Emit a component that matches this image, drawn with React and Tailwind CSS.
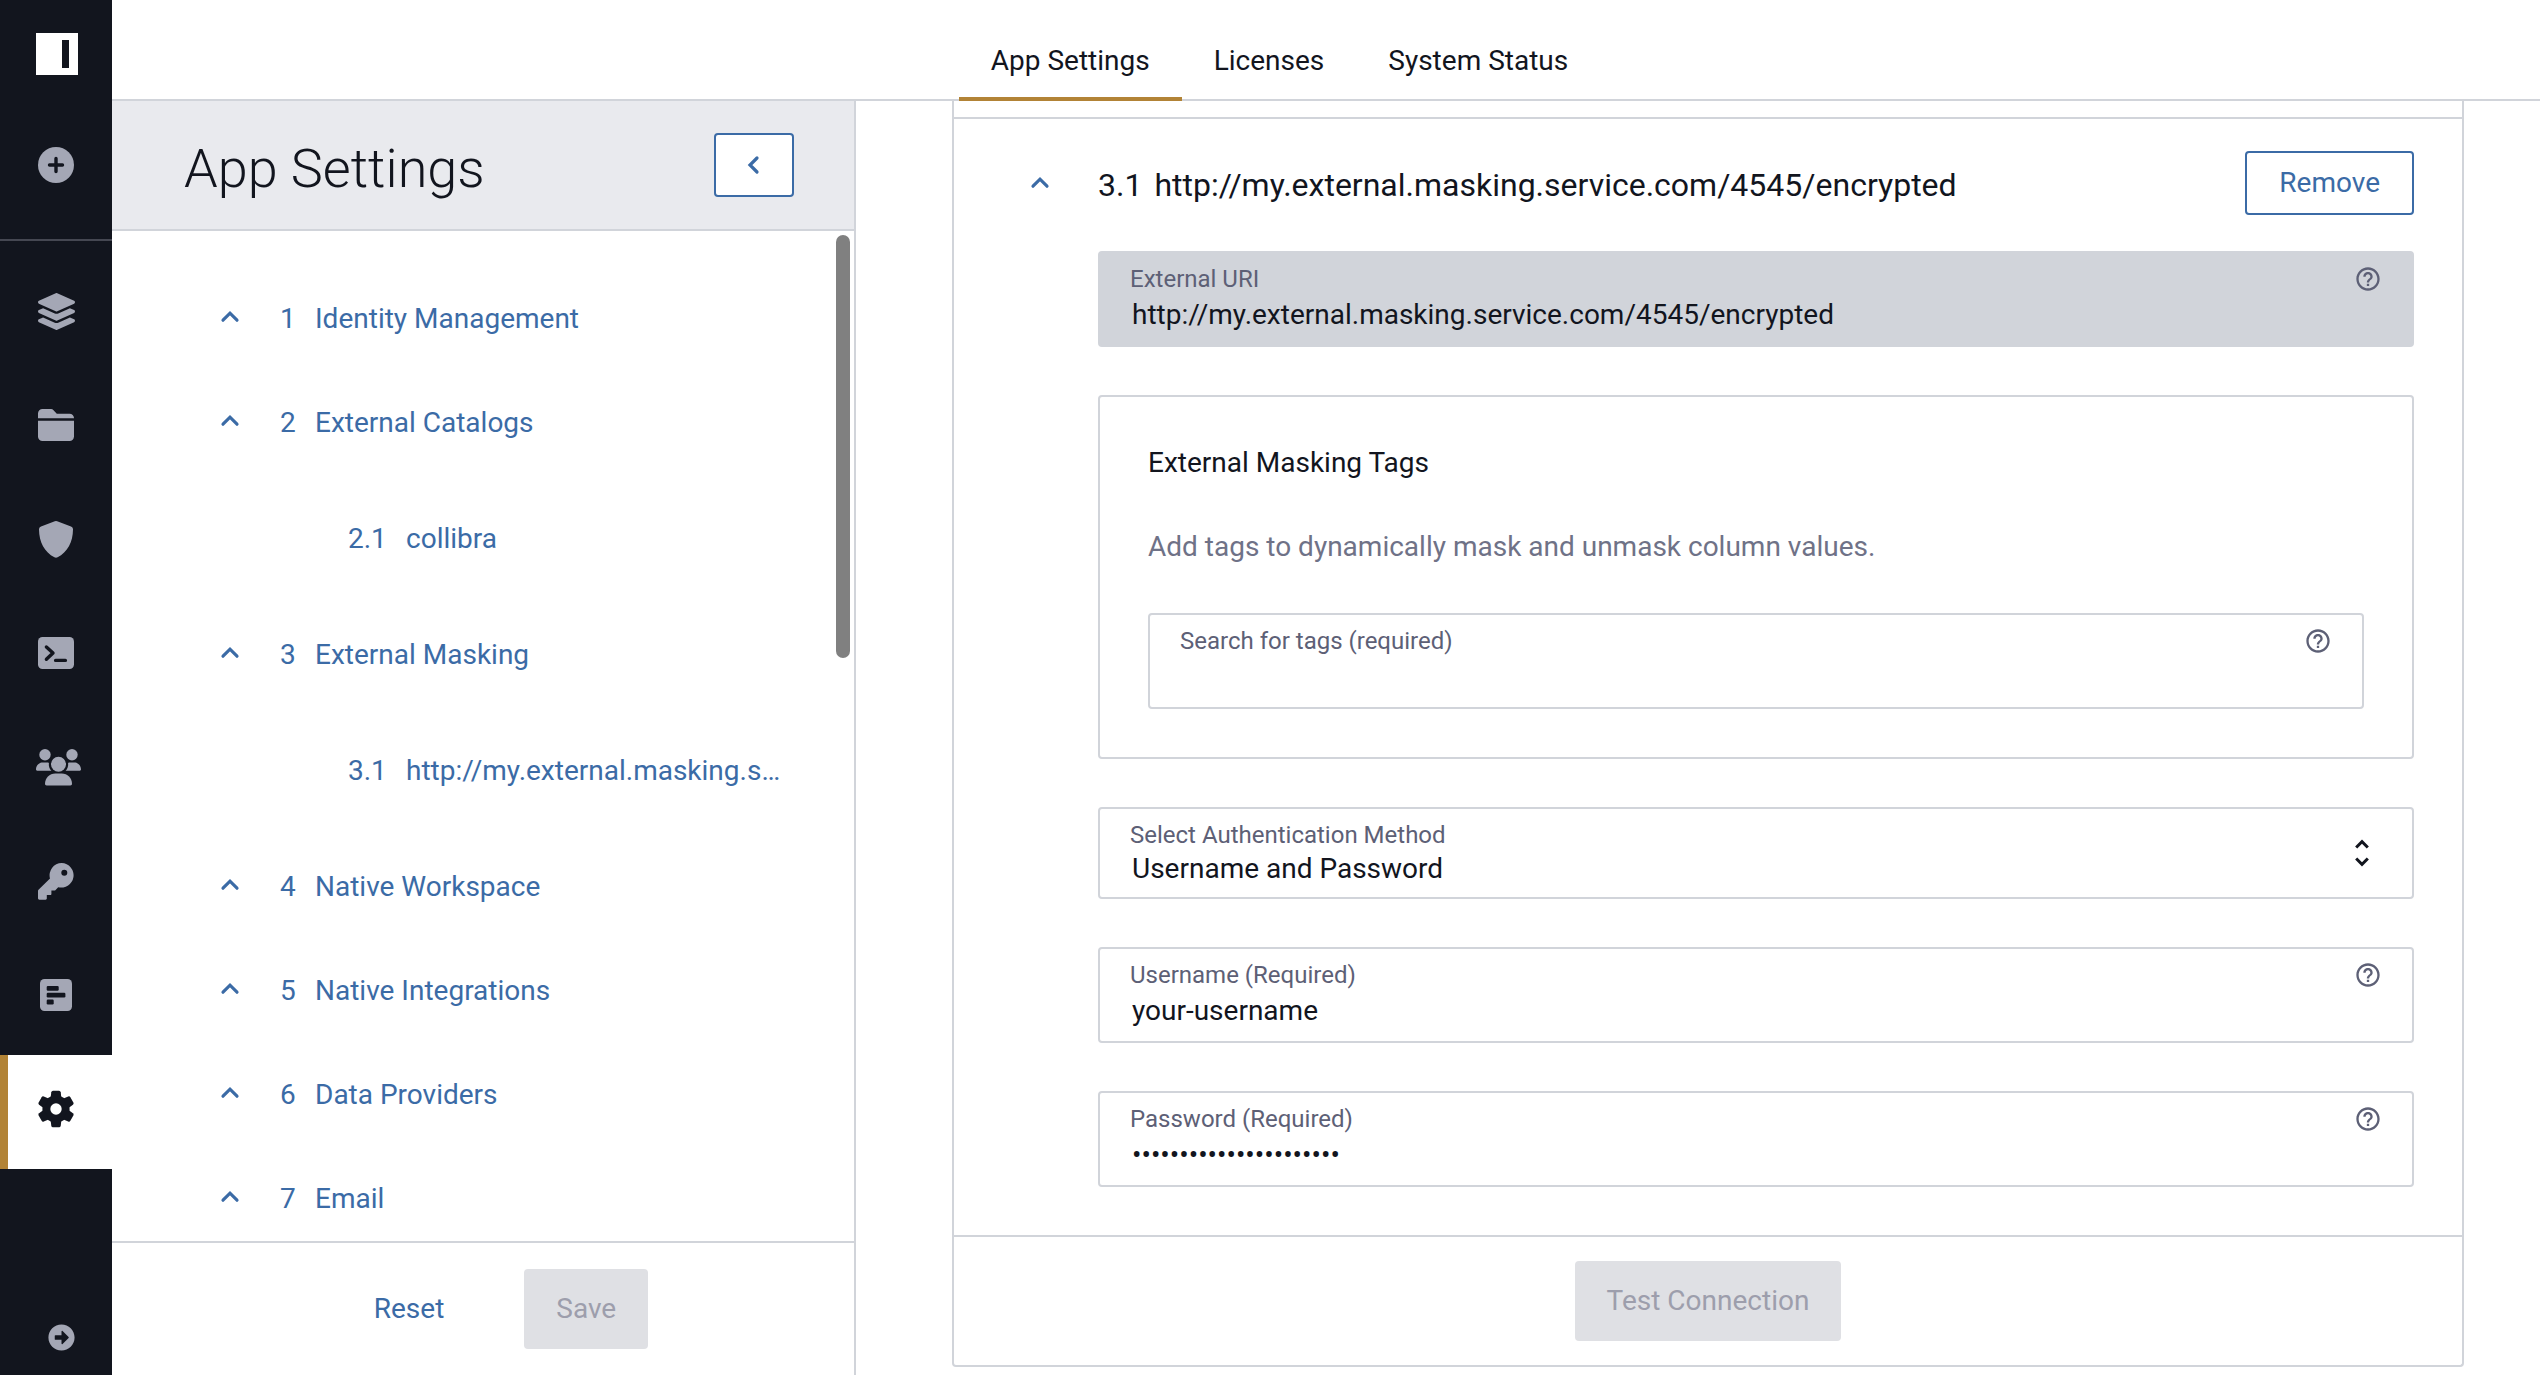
import { useState } from 'react';
import { FaLayerGroup, FaArrowAltCircleRight } from 'react-icons/fa';
import { MdHelpOutline, MdUnfoldMore } from 'react-icons/md';

const Logo = () => (
  <svg width="44" height="42" viewBox="-2 0 44 42">
    <rect width="42" height="42" fill="#fff" />
    <rect x="26" y="7" width="7" height="28" fill="#12151e" />
  </svg>
);

const PlusIcon = () => (
  <svg width="36" height="36" viewBox="0 0 36 36">
    <circle cx="18" cy="18" r="18" fill="currentColor" />
    <path d="M18 11.500v13M11.500 18h13" stroke="#12151e" strokeWidth="3.400" strokeLinecap="round" />
  </svg>
);

const FolderIcon = () => (
  <svg width="36" height="32" viewBox="0 0 36 32" fill="currentColor">
    <path d="M0 9.300V4.500A4.500 4.500 0 0 1 4.500 0h8.700a3 3 0 0 1 2.100 .9l3.500 3.800h12.700A4.500 4.500 0 0 1 36 9.300z" />
    <path d="M0 11.700h36v15.800a4.500 4.500 0 0 1-4.500 4.500h-27A4.500 4.500 0 0 1 0 27.500z" />
  </svg>
);

const ShieldIcon = () => (
  <svg width="34" height="37" viewBox="0 0 34 37" fill="currentColor">
    <path d="M15.800 .3a3 3 0 0 1 2.400 0L32 5.600A3 3 0 0 1 34 8.600C33.900 21 28.500 31.500 18.600 36.300a3.500 3.500 0 0 1-3.200 0C5.500 31.500 .1 21 0 8.600A3 3 0 0 1 2 5.600z" />
  </svg>
);

const TerminalIcon = () => (
  <svg width="36" height="32" viewBox="0 0 36 32" fill="none">
    <rect width="36" height="32" rx="4.500" fill="currentColor" />
    <path d="M8.400 10l6.600 6-6.600 6.300M17.600 23.400h9.800" stroke="#12151e" strokeWidth="3.400" strokeLinecap="round" strokeLinejoin="round" />
  </svg>
);

const UsersIcon = () => (
  <svg width="50" height="37" viewBox="-5 0 50 37" fill="currentColor">
    <circle cx="9" cy="5.700" r="5.700" />
    <circle cx="36" cy="5.700" r="5.700" />
    <circle cx="22.500" cy="15.300" r="7.500" />
    <path d="M9 34.800c0-6 4.500-10.400 10.300-10.400h6.400c5.800 0 10.300 4.400 10.300 10.400 0 .9-.7 1.600-1.600 1.600H10.600c-.9 0-1.600-.7-1.600-1.600z" />
    <path d="M0 20.600c0-4 3-7 6.800-7h4.400c.6 0 1.200.1 1.700.3-.4 3 .5 5.800 2.500 7.900H1.200c-.7 0-1.200-.5-1.200-1.200z" />
    <path d="M45 20.600c0-4-3-7-6.800-7h-4.400c-.6 0-1.200.1-1.700.3.400 3-.5 5.800-2.500 7.900h14.200c.7 0 1.200-.5 1.200-1.200z" />
  </svg>
);

const KeyIcon = () => (
  <svg width="36" height="37" viewBox="0 0 36 37" fill="currentColor" fillRule="evenodd">
    <path d="M23.700 0a12.300 12.300 0 1 1-3.500 24.200L17.600 26.900c-.3.400-.8.600-1.200.6h-3v3.400c0 .7-.5 1.200-1.200 1.200H8.800v3.400c0 .7-.5 1.200-1.200 1.200H1.400C.6 36.700 0 36.100 0 35.300v-7.400c0-.4.200-.9.500-1.200L12 15.600A12.300 12.300 0 0 1 23.700 0zM26.300 6.700a3 3 0 1 0 0 6 3 3 0 0 0 0-6z" />
  </svg>
);

const ReportIcon = () => (
  <svg width="32" height="32" viewBox="0 0 32 32">
    <rect width="32" height="32" rx="4.500" fill="currentColor" />
    <g fill="#12151e">
      <rect x="6.700" y="6.900" width="12" height="4.800" rx="1.200" />
      <rect x="6.700" y="13.700" width="18.700" height="4.800" rx="1.200" />
      <rect x="6.700" y="20.600" width="7" height="4.800" rx="1.200" />
    </g>
  </svg>
);

const GearIcon = () => (
  <svg width="38" height="38" viewBox="-19 -19 38 38">
    <g fill="#12151e">
      <circle r="13.600" />
      {[0, 60, 120, 180, 240, 300].map((deg) => (
        <path key={deg} transform={`rotate(${deg})`} d="M-4.700 -16.800Q-4.500 -18.300 -3 -18.300H3Q4.500 -18.300 4.700 -16.800L5.400 -11H-5.400z" />
      ))}
    </g>
    <circle r="5.700" fill="#fff" />
  </svg>
);

const ChevronUp = () => (
  <svg width="24" height="24" viewBox="0 0 24 24" fill="none" stroke="currentColor" strokeWidth="3.200" strokeLinecap="round">
    <path d="M5 15.200l7-7 7 7" />
  </svg>
);

const ChevronLeft = () => (
  <svg width="24" height="24" viewBox="0 0 24 24" fill="none" stroke="currentColor" strokeWidth="3.200" strokeLinecap="round">
    <path d="M15 5l-7 7 7 7" />
  </svg>
);

const navItems = [
  { name: 'Data Sources', icon: <FaLayerGroup size={37} /> },
  { name: 'Projects', icon: <FolderIcon /> },
  { name: 'Policies', icon: <ShieldIcon /> },
  { name: 'Query Editor', icon: <TerminalIcon /> },
  { name: 'People', icon: <UsersIcon /> },
  { name: 'Keys', icon: <KeyIcon /> },
  { name: 'Reports', icon: <ReportIcon /> },
  { name: 'Settings', icon: <GearIcon />, active: true },
];

const tabs = ['App Settings', 'Licenses', 'System Status'];

const sections = [
  { num: '1', label: 'Identity Management' },
  { num: '2', label: 'External Catalogs', children: [{ num: '2.1', label: 'collibra' }] },
  {
    num: '3',
    label: 'External Masking',
    children: [{ num: '3.1', label: 'http://my.external.masking.service.com/4545/encrypted' }],
  },
  { num: '4', label: 'Native Workspace' },
  { num: '5', label: 'Native Integrations' },
  { num: '6', label: 'Data Providers' },
  { num: '7', label: 'Email' },
];

const Sidebar = () => (
  <nav className="flex w-28 shrink-0 flex-col bg-[#12151e] text-[#a4a7b5]">
    <div className="flex flex-col items-center gap-[72px] border-b-2 border-[#454752] pt-[33px] pb-14">
      <a href="#home" aria-label="Home"><Logo /></a>
      <button type="button" aria-label="Create"><PlusIcon /></button>
    </div>
    <div className="flex flex-col pt-4">
      {navItems.map((item) => (
        <a
          key={item.name}
          href="#nav"
          aria-label={item.name}
          className={`relative flex h-[114px] items-center justify-center pb-1.5 ${item.active ? 'bg-white' : ''}`}
        >
          {item.active && <span className="absolute inset-y-0 left-0 w-2 bg-[#b28336]" />}
          {item.icon}
        </a>
      ))}
    </div>
    <button type="button" aria-label="Expand menu" className="mt-auto mb-6 ml-12 self-start">
      <FaArrowAltCircleRight size={27} />
    </button>
  </nav>
);

const SettingsNav = () => (
  <aside className="flex w-[744px] shrink-0 flex-col border-r-2 border-[#d1d4da]">
    <div className="flex h-[130px] shrink-0 items-center justify-between border-b-2 border-[#d1d4da] bg-[#e9eaee] pr-[60px] pl-[72px]">
      <h1 className="pt-2 text-[54px] leading-[64px] font-light">App Settings</h1>
      <button type="button" aria-label="Collapse" className="flex h-16 w-20 items-center justify-center rounded-[4px] border-2 border-[#3b6ba6] bg-white text-[#3b6ba6]">
        <ChevronLeft />
      </button>
    </div>

    <div className="relative min-h-0 flex-1 overflow-hidden pt-[34px] pr-[60px] text-[#3b6ba6]">
      {sections.map((s) => (
        <div key={s.num}>
          <a href="#section" className="flex h-[104px] items-center pl-[106px]">
            <ChevronUp />
            <span className="ml-[38px] w-[35px] pt-1">{s.num}</span>
            <span className="pt-1">{s.label}</span>
          </a>
          {s.children?.map((c) => (
            <a key={c.num} href="#section" className="flex h-32 items-center pl-[236px]">
              <span className="w-[58px] shrink-0 pt-1">{c.num}</span>
              <span className="truncate pt-1">{c.label}</span>
            </a>
          ))}
        </div>
      ))}
      <div className="absolute top-1 right-1 h-[423px] w-3.5 rounded-full bg-[#808080]" />
    </div>

    <div className="flex h-[134px] shrink-0 items-center justify-center gap-12 border-t-2 border-[#d1d4da] pl-6">
      <button type="button" className="h-20 px-8 text-[#3b6ba6]">Reset</button>
      <button type="button" disabled className="h-20 rounded-[4px] bg-[#dfe0e4] px-8 text-[#9d9eac]">Save</button>
    </div>
  </aside>
);

// Bordered text field with the label inside and a help icon on the right
const Field = ({ id, label, type = 'text', value, onChange, disabled }) => (
  <div className={`relative rounded-[4px] border-2 border-[#d1d4da] px-[30px] py-3 ${disabled ? 'bg-[#d1d4da]' : 'bg-white'}`}>
    <label htmlFor={id} className="block text-[24px] leading-[28px] text-[#5d6076]">{label}</label>
    <input
      id={id}
      type={type}
      value={value}
      onChange={onChange}
      disabled={disabled}
      className="block h-10 w-full bg-transparent pt-1 pl-0.5 outline-none"
    />
    <MdHelpOutline size={28} className="absolute top-3 right-[30px] text-[#5d6076]" />
  </div>
);

const MaskingCard = () => {
  const [form, setForm] = useState({
    uri: 'http://my.external.masking.service.com/4545/encrypted',
    tags: '',
    method: 'password',
    username: 'your-username',
    password: 'your-password-is-here!',
  });

  const handleChange = (key) => (e) => setForm({ ...form, [key]: e.target.value });

  return (
    <section className="rounded-b-[4px] border-x-2 border-b-2 border-[#d1d4da]">
      <div className="h-4" />
      <div className="border-t-2 border-[#d1d4da] pt-8 pr-12 pb-12">
        <div className="flex items-center">
          <button type="button" aria-label="Collapse section" className="mr-[46px] ml-[74px] text-[#3b6ba6]"><ChevronUp /></button>
          <h2 className="flex flex-1 gap-3 pt-1 text-[32px] leading-[40px]">
            <span>3.1</span>
            <span>{form.uri}</span>
          </h2>
          <button type="button" className="h-16 rounded-[4px] border-2 border-[#3b6ba6] px-8 text-[#3b6ba6]">Remove</button>
        </div>

        <form className="mt-9 ml-36 flex flex-col gap-12" onSubmit={(e) => e.preventDefault()}>
          <Field id="uri" label="External URI" value={form.uri} onChange={handleChange('uri')} disabled />

          <div className="flex flex-col gap-12 rounded-[4px] border-2 border-[#d1d4da] p-12">
            <h3 className="leading-[36px]">External Masking Tags</h3>
            <p className="leading-[36px] text-[#6f7287]">Add tags to dynamically mask and unmask column values.</p>
            <Field id="tags" label="Search for tags (required)" value={form.tags} onChange={handleChange('tags')} />
          </div>

          <div className="relative rounded-[4px] border-2 border-[#d1d4da] px-[30px] pt-3 pb-2.5">
            <label htmlFor="method" className="block text-[24px] leading-[28px] text-[#5d6076]">Select Authentication Method</label>
            <select id="method" value={form.method} onChange={handleChange('method')} className="block h-[38px] w-full appearance-none bg-transparent pl-0.5 outline-none">
              <option value="password">Username and Password</option>
            </select>
            <MdUnfoldMore size={36} className="pointer-events-none absolute top-[26px] right-8" />
          </div>

          <Field id="username" label="Username (Required)" value={form.username} onChange={handleChange('username')} />
          <Field id="password" label="Password (Required)" type="password" value={form.password} onChange={handleChange('password')} />
        </form>
      </div>

      <div className="flex justify-center border-t-2 border-[#d1d4da] py-6">
        <button type="button" disabled className="h-20 rounded-[4px] bg-[#dfe0e4] px-8 text-[#9d9eac]">Test Connection</button>
      </div>
    </section>
  );
};

const App = () => {
  const [tab, setTab] = useState('App Settings');

  return (
    <div className="flex h-screen overflow-hidden bg-white font-[Roboto,sans-serif] text-[28px] leading-[40px] text-[#12151e]">
      <Sidebar />
      <div className="flex min-w-0 flex-1 flex-col">
        <header className="flex h-[101px] shrink-0 justify-center border-b-2 border-[#d1d4da] pr-[93px]">
          {tabs.map((t) => (
            <button
              key={t}
              type="button"
              onClick={() => setTab(t)}
              className={`-mb-0.5 border-b-4 px-8 pt-6 ${t === tab ? 'border-[#b28336]' : 'border-transparent'}`}
            >
              {t}
            </button>
          ))}
        </header>

        <div className="flex min-h-0 flex-1">
          <SettingsNav />
          <main className="min-w-0 flex-1 overflow-hidden pr-[76px] pl-24">
            <MaskingCard />
          </main>
        </div>
      </div>
    </div>
  );
};

export default App;
